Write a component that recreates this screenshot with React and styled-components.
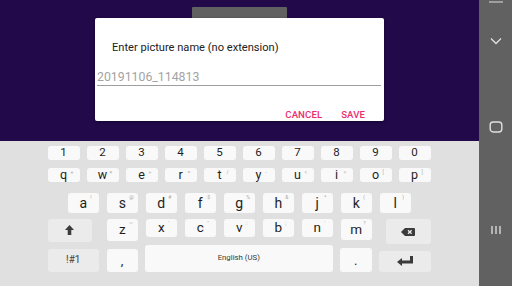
import React from "react";
import styled, { createGlobalStyle } from "styled-components";

const Global = createGlobalStyle`
  html, body { margin: 0; padding: 0; }
  body {
    width: 512px;
    height: 286px;
    overflow: hidden;
    font-family: Roboto, "Noto Sans", "Liberation Sans", sans-serif;
  }
`;

const Screen = styled.div`
  display: flex;
  width: 512px;
  height: 286px;
`;

const Main = styled.div`
  display: flex;
  flex-direction: column;
  width: 479px;
`;

const AppArea = styled.div`
  height: 141px;
  background: #22094a;
  display: flex;
  flex-direction: column;
`;

const Tab = styled.div`
  margin: 7px 0 0 192px;
  width: 95px;
  height: 11px;
  background: #616161;
  border-radius: 1px 1px 0 0;
`;

const Dialog = styled.div`
  margin-left: 95px;
  width: 289px;
  height: 103px;
  background: #ffffff;
  border-radius: 2px;
  box-shadow: 0 1px 3px rgba(0, 0, 0, 0.45);
  display: flex;
  flex-direction: column;
`;

const DialogTitle = styled.div`
  margin: 23px 0 0 17px;
  font-size: 11.1px;
  line-height: 13px;
  color: #212121;
`;

const NameInput = styled.div`
  margin: 15px 0 0 2px;
  width: 284px;
  height: 16px;
  border-bottom: 1px solid #9e9e9e;
  font-size: 12.3px;
  line-height: 16px;
  color: #a3a3a3;
`;

const Actions = styled.div`
  display: flex;
  justify-content: flex-end;
  gap: 19px;
  margin: 23px 19px 0 0;
`;

const ActionButton = styled.span`
  font-size: 9.6px;
  font-weight: 500;
  line-height: 11px;
  letter-spacing: 0.1px;
  color: #ec2d6c;
`;

const Keyboard = styled.div`
  flex: 1;
  background: #e0e0e0;
  display: flex;
  flex-direction: column;
  padding-left: 47.5px;
`;

const Row = styled.div`
  display: flex;
  align-items: ${(p) => p.$align || "flex-start"};
  gap: ${(p) => p.$gap}px;
  height: ${(p) => p.$h}px;
  margin-top: ${(p) => p.$mt}px;
  padding-left: ${(p) => p.$pl || 0}px;
`;

const Key = styled.div`
  position: relative;
  flex: none;
  width: ${(p) => p.$w}px;
  height: ${(p) => p.$h}px;
  margin-left: ${(p) => p.$ml || 0}px;
  border-radius: 3px;
  background: ${(p) => (p.$fn ? "#ebebeb" : "#f9f9f9")};
  display: flex;
  align-items: center;
  justify-content: center;
  font-size: ${(p) => p.$fs || 12}px;
  color: ${(p) => (p.$fn ? "#444" : "#1f1f1f")};
  line-height: 1;
`;

const Hint = styled.span`
  position: absolute;
  left: calc(50% + 7px);
  top: 2px;
  font-size: 5px;
  line-height: 1;
  color: #a8a8a8;
`;

const SpaceLabel = styled.span`
  font-size: 7.8px;
  color: #3a3a3a;
`;

const NavBar = styled.div`
  width: 33px;
  height: 286px;
  background: #616161;
  display: flex;
  flex-direction: column;
  align-items: center;
`;

const NavIcon = styled.svg`
  display: block;
  flex: none;
  margin-top: ${(p) => p.$mt}px;
`;

const numbers = ["1", "2", "3", "4", "5", "6", "7", "8", "9", "0"];
const qRow = [
  ["q", "+"], ["w", "×"], ["e", "÷"], ["r", "="], ["t", "/"],
  ["y", "-"], ["u", "<"], ["i", ">"], ["o", "["], ["p", "]"],
];
const aRow = [
  ["a", "!"], ["s", "@"], ["d", "#"], ["f", "$"], ["g", "%"],
  ["h", "&"], ["j", "*"], ["k", "("], ["l", ")"],
];
const zRow = [
  ["z", "~", 22], ["x", "'", 18.3], ["c", "\"", 18.3], ["v", ":", 18.3],
  ["b", ";", 18.3], ["n", "'", 18.3], ["m", "?", 20.7],
];

const ShiftIcon = () => (
  <svg width="9" height="10" viewBox="0 0 9 10">
    <path d="M4.5 0 L9 5 L6.3 5 L6.3 10 L2.7 10 L2.7 5 L0 5 Z" fill="#3b3b3b" />
  </svg>
);

const BackspaceIcon = () => (
  <svg width="14" height="8" viewBox="0 0 14 8">
    <path d="M4 0 H13 A1 1 0 0 1 14 1 V7 A1 1 0 0 1 13 8 H4 L0 4 Z" fill="#3b3b3b" />
    <path d="M7 2.2 L10.6 5.8 M10.6 2.2 L7 5.8" stroke="#ebebeb" strokeWidth="1.3" />
  </svg>
);

const EnterIcon = () => (
  <svg width="16" height="10" viewBox="0 0 16 10">
    <path d="M13 0 H16 V7.5 H5 V10 L0 6 L5 2 V4.5 H13 Z" fill="#3b3b3b" />
  </svg>
);

export default function App() {
  return (
    <>
      <Global />
      <Screen>
        <Main>
          <AppArea>
            <Tab />
            <Dialog>
              <DialogTitle>Enter picture name (no extension)</DialogTitle>
              <NameInput>20191106_114813</NameInput>
              <Actions>
                <ActionButton>CANCEL</ActionButton>
                <ActionButton>SAVE</ActionButton>
              </Actions>
            </Dialog>
          </AppArea>
          <Keyboard>
            <Row $h={14} $mt={5} $gap={7}>
              {numbers.map((n) => (
                <Key key={n} $w={32} $h={14} $fs={11.5}>{n}</Key>
              ))}
            </Row>
            <Row $h={14} $mt={8} $gap={7}>
              {qRow.map(([l, h]) => (
                <Key key={l} $w={32} $h={14} $fs={12.5}>
                  {l}
                  <Hint>{h}</Hint>
                </Key>
              ))}
            </Row>
            <Row $h={20} $mt={11} $gap={7.5} $pl={20}>
              {aRow.map(([l, h]) => (
                <Key key={l} $w={31.5} $h={20} $fs={14}>
                  {l}
                  <Hint>{h}</Hint>
                </Key>
              ))}
            </Row>
            <Row $h={25} $mt={6} $gap={7.5}>
              <Key $w={44.5} $h={22.5} $fn>
                <ShiftIcon />
              </Key>
              {zRow.map(([l, h, kh], i) => (
                <Key key={l} $w={31.5} $h={kh} $fs={13.5} $ml={i === 0 ? 7 : 0}>
                  {l}
                  <Hint>{h}</Hint>
                </Key>
              ))}
              <Key $w={45} $h={25} $fn $ml={6}>
                <BackspaceIcon />
              </Key>
            </Row>
            <Row $h={27} $mt={1} $gap={7.5} $align="flex-end">
              <Key $w={51.5} $h={23.3} $fn $fs={10}>!#1</Key>
              <Key $w={31} $h={23.3} $fs={13}>,</Key>
              <Key $w={187.5} $h={27.3}>
                <SpaceLabel>English (US)</SpaceLabel>
              </Key>
              <Key $w={31.5} $h={24} $fs={13}>.</Key>
              <Key $w={51.5} $h={21.3} $fn>
                <EnterIcon />
              </Key>
            </Row>
          </Keyboard>
        </Main>
        <NavBar>
          <NavIcon $mt={1} width="14" height="2" viewBox="0 0 14 2">
            <path d="M0 1 H14" stroke="#c8c8c8" strokeWidth="1.2" />
          </NavIcon>
          <NavIcon $mt={34} width="12" height="8" viewBox="0 0 12 8">
            <path d="M1 1.5 L6 6.5 L11 1.5" stroke="#e0e0e0" strokeWidth="1.3" fill="none" />
          </NavIcon>
          <NavIcon $mt={76} width="14" height="12" viewBox="0 0 14 12">
            <rect x="1.2" y="1" width="11.6" height="10" rx="3" stroke="#e0e0e0" strokeWidth="1.4" fill="none" />
          </NavIcon>
          <NavIcon $mt={92} width="12" height="10" viewBox="0 0 12 10">
            <path d="M2 1 V9 M6 1 V9 M10 1 V9" stroke="#e0e0e0" strokeWidth="1.3" />
          </NavIcon>
        </NavBar>
      </Screen>
    </>
  );
}
